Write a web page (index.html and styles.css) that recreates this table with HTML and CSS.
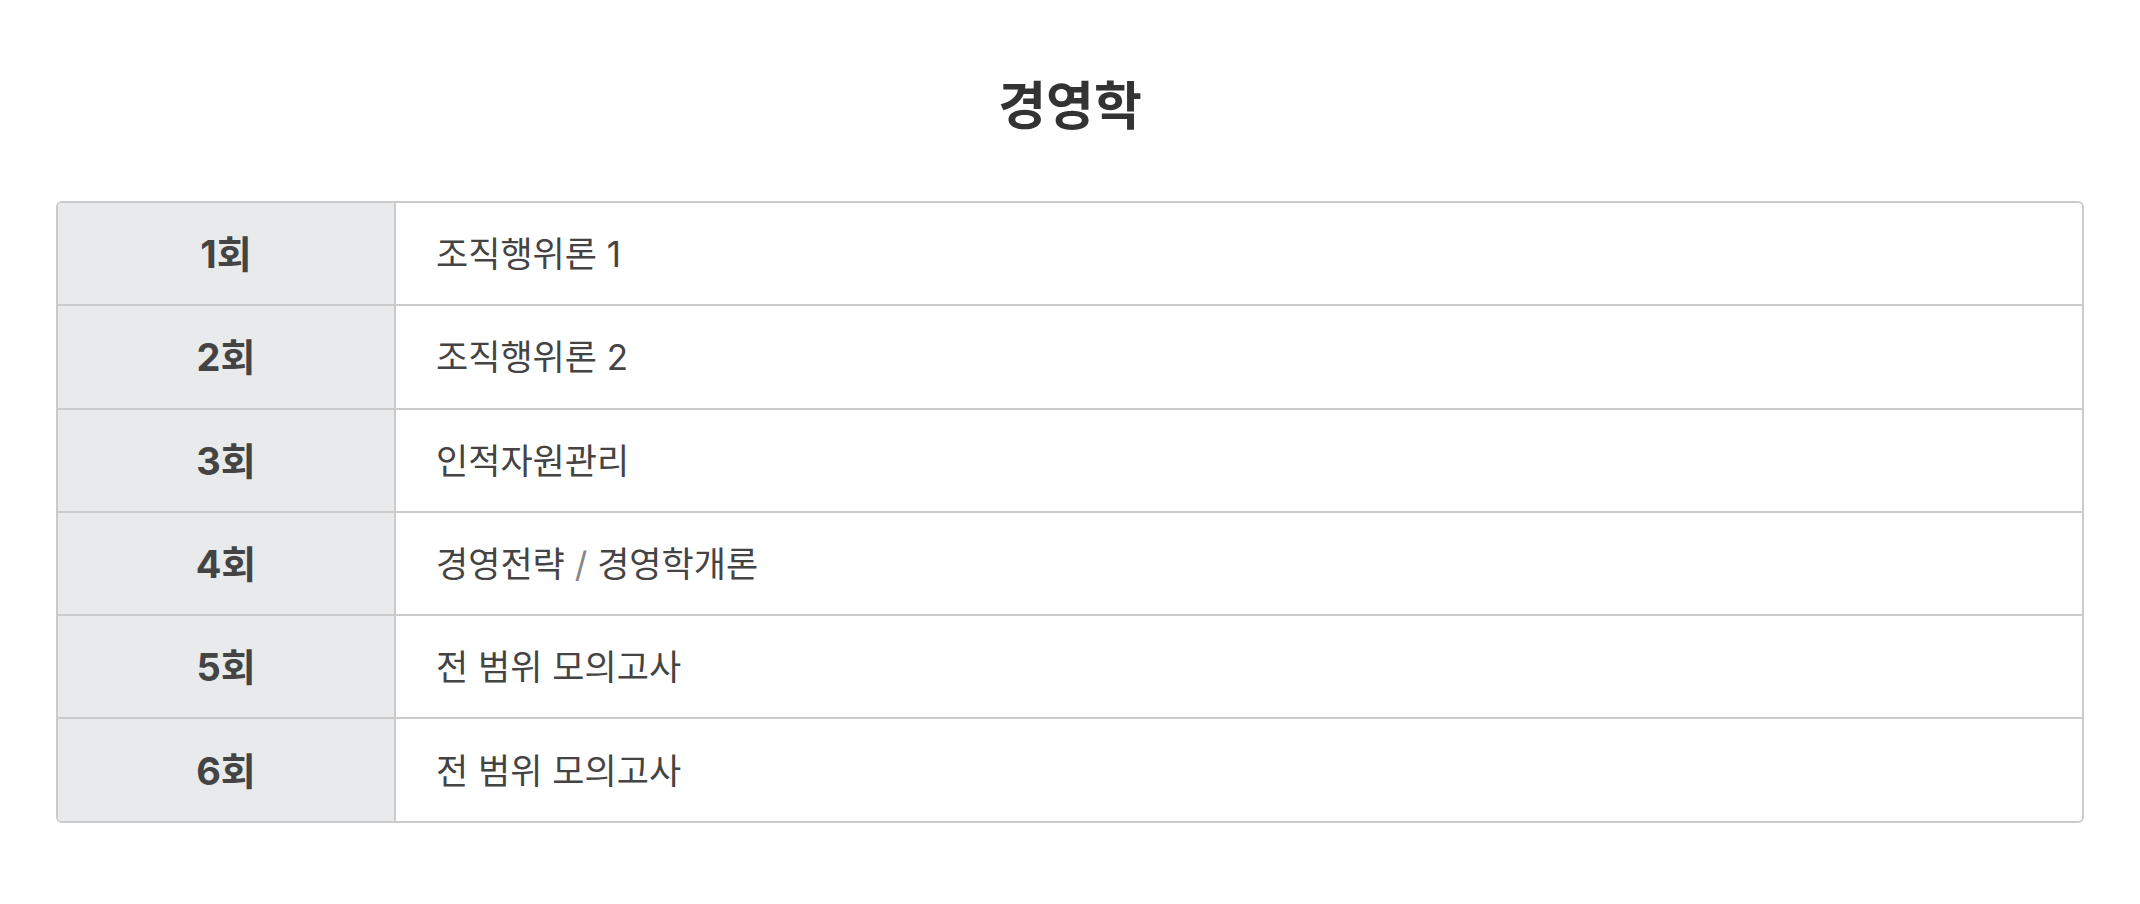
FILE: index.html
```html
<!DOCTYPE html>
<html lang="ko">
<head>
    <meta charset="UTF-8">
    <meta name="viewport" content="width=device-width, initial-scale=1.0">
    <title>경영학</title>
    <link rel="stylesheet" href="styles.css">
</head>
<body>
    <div class="card">
        <h1 class="title">경영학</h1>
        <div class="table-wrap">
            <table class="schedule">
                <tr><th>1회</th><td>조직행위론 1</td></tr>
                <tr><th>2회</th><td>조직행위론 2</td></tr>
                <tr><th>3회</th><td>인적자원관리</td></tr>
                <tr><th>4회</th><td>경영전략 <span class="slash">/</span> 경영학개론</td></tr>
                <tr><th>5회</th><td>전 범위 모의고사</td></tr>
                <tr><th>6회</th><td>전 범위 모의고사</td></tr>
            </table>
        </div>
    </div>
</body>
</html>
```

FILE: styles.css
```css
html, body {
    margin: 0;
    padding: 0;
    background-color: #ffffff;
}
body {
    font-family: Inter, "Noto Sans CJK KR", sans-serif;
    color: #444444;
}
.card {
    box-sizing: border-box;
    height: 904px;
    border-radius: 20px;
    padding: 76px 56px 0 56px;
}
.title {
    margin: 0 0 63px 0;
    font-size: 52px;
    line-height: 62px;
    font-weight: 700;
    text-align: center;
    color: #333333;
}
.table-wrap {
    border: 2px solid #cbcbcb;
    border-radius: 6px;
    overflow: hidden;
}
.schedule {
    width: 100%;
    border-collapse: collapse;
}
.schedule tr + tr th,
.schedule tr + tr td {
    border-top: 2px solid #cbcbcb;
}
.schedule th {
    width: 336px;
    height: 97.3px;
    padding: 0 0 4px 0;
    background-color: #e9eaec;
    border-right: 2px solid #cbcbcb;
    font-size: 38px;
    font-weight: 700;
    color: #444444;
    text-align: center;
}
.schedule td {
    height: 97.3px;
    padding: 0 0 4px 40px;
    font-size: 35px;
    font-weight: 400;
    color: #444444;
    text-align: left;
}
.slash {
    color: #888888;
}
```
